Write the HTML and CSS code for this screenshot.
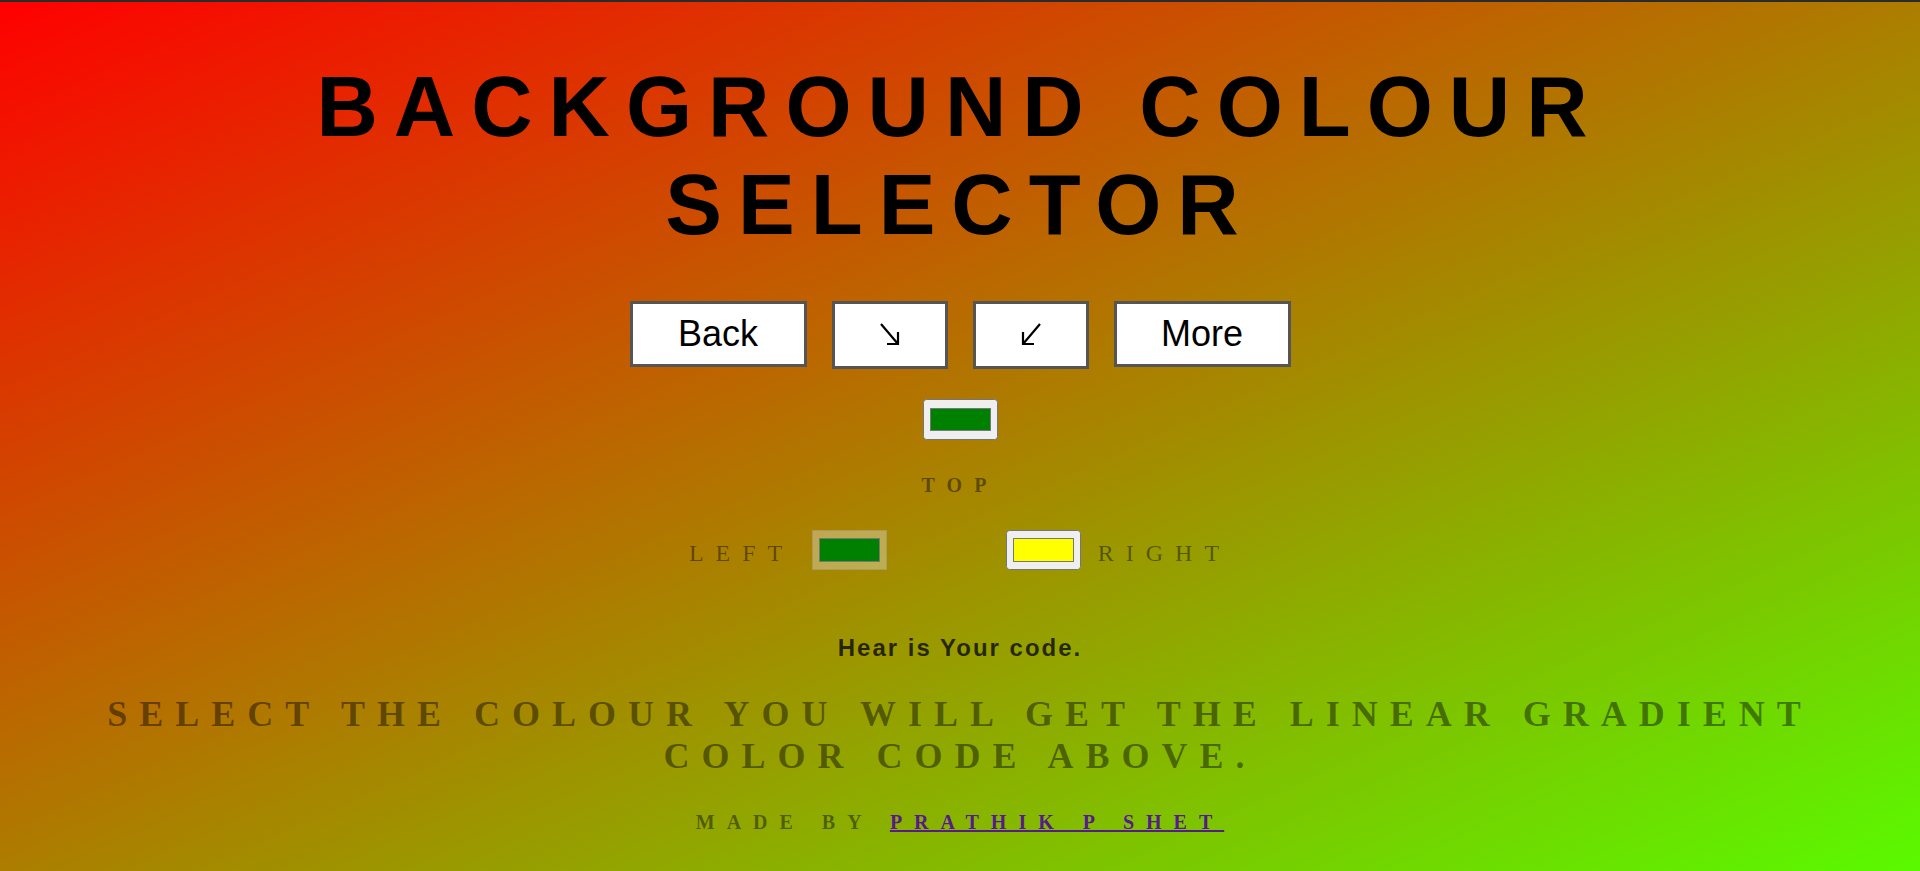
FILE: index.html
```html
<!DOCTYPE html>
<html lang="en">
<head>
<meta charset="utf-8">
<title>Background Colour Selector</title>
<link rel="stylesheet" href="styles.css">
</head>
<body>
<div class="topbar"></div>
<main class="page">
  <h1 class="title">BACKGROUND COLOUR SELECTOR</h1>
  <div class="buttons">
    <button class="btn btn-wide">Back</button>
    <button class="btn btn-arrow" aria-label="↘">
      <svg class="arrow" width="24" height="26" viewBox="0 0 24 26"><path d="M3 2 L20 22 M20 10 V22 H9" fill="none" stroke="#000" stroke-width="2.2" stroke-linecap="butt" stroke-linejoin="miter"/></svg>
    </button>
    <button class="btn btn-arrow" aria-label="↙">
      <svg class="arrow" width="24" height="26" viewBox="0 0 24 26"><path d="M21 2 L4 22 M4 10 V22 H15" fill="none" stroke="#000" stroke-width="2.2" stroke-linecap="butt" stroke-linejoin="miter"/></svg>
    </button>
    <button class="btn btn-wide">More</button>
  </div>
  <input type="color" class="swatch swatch-top" value="#008000">
  <p class="label label-top">TOP</p>
  <div class="side-row">
    <span class="label label-side">LEFT</span>
    <input type="color" class="swatch swatch-faded" value="#008000">
    <input type="color" class="swatch" value="#ffff00">
    <span class="label label-side">RIGHT</span>
  </div>
  <h2 class="code">Hear is Your code.</h2>
  <p class="hint">SELECT THE COLOUR YOU WILL GET THE LINEAR GRADIENT COLOR CODE ABOVE.</p>
  <p class="credit">MADE BY <a href="#" class="author">PRATHIK P SHET</a></p>
</main>
</body>
</html>
```

FILE: styles.css
```css
html, body {
  margin: 0;
  padding: 0;
}

body {
  min-height: 871px;
  background: linear-gradient(to bottom right, #ff0000, rgb(90, 250, 0));
  font-family: "Liberation Serif", "Times New Roman", serif;
  overflow: hidden;
}

.topbar {
  height: 2px;
  background: #2b2b2b;
}

.page {
  display: flex;
  flex-direction: column;
  align-items: center;
  text-align: center;
}

.title {
  margin: 56px 0 0;
  width: 1500px;
  font-family: "Liberation Sans", Arial, sans-serif;
  font-size: 85px;
  font-weight: bold;
  line-height: normal;
  letter-spacing: 16px;
  color: #000;
}

.buttons {
  margin-top: 47px;
  display: flex;
  align-items: flex-start;
  gap: 25px;
}

.btn {
  box-sizing: border-box;
  margin: 0;
  padding: 0;
  background: #fff;
  border: 3px solid #555;
  border-radius: 0;
  color: #000;
  font-family: "Liberation Sans", Arial, sans-serif;
  font-size: 36px;
  line-height: 1;
  display: flex;
  align-items: center;
  justify-content: center;
}

.btn-wide {
  width: 177px;
  height: 66px;
}

.btn-arrow {
  width: 116px;
  height: 68px;
}

.arrow {
  display: block;
}

.swatch {
  zoom: 1.5;
  margin: 0;
}

.swatch-top {
  margin-top: 20px;
}

.swatch-faded {
  background-color: rgba(239, 239, 239, 0.35);
  border-color: rgba(118, 118, 118, 0.3);
}

.label {
  color: rgba(0, 0, 0, 0.45);
  letter-spacing: 12px;
  line-height: normal;
}

.label-top {
  margin: 34px 0 0;
  font-size: 20px;
  font-weight: bold;
}

.side-row {
  margin-top: 33px;
  display: flex;
  align-items: flex-start;
}

.label-side {
  font-size: 24px;
  margin-top: 10px;
}

.side-row .label-side:first-child {
  margin-right: 18px;
}

.side-row .label-side:last-child {
  margin-left: 17px;
}

.side-row .swatch + .swatch {
  margin-left: 79px;
}

.code {
  margin: 64px 0 0;
  font-family: "Liberation Sans", Arial, sans-serif;
  font-size: 24px;
  font-weight: bold;
  letter-spacing: 2px;
  line-height: normal;
  color: rgba(0, 0, 0, 0.75);
}

.hint {
  margin: 31px 0 0;
  max-width: 1800px;
  font-size: 36px;
  font-weight: bold;
  letter-spacing: 12px;
  line-height: normal;
  color: rgba(0, 0, 0, 0.45);
}

.credit {
  margin: 34px 0 0;
  font-size: 20px;
  font-weight: bold;
  letter-spacing: 12px;
  line-height: normal;
  color: rgba(0, 0, 0, 0.45);
}

.author {
  color: #551a8b;
  text-decoration: underline;
}
```
